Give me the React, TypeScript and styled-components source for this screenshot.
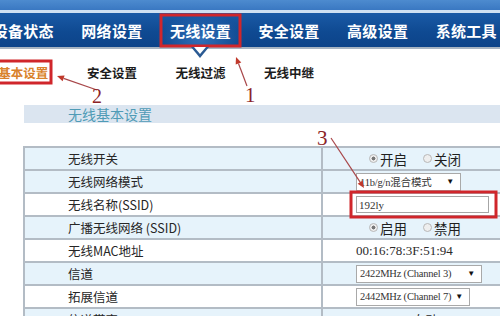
import styled, { createGlobalStyle } from "styled-components";

const GlobalStyle = createGlobalStyle`
  html, body {
    margin: 0;
    padding: 0;
    background: #ffffff;
    overflow: hidden;
  }
`;

const CJK = `"Noto Sans CJK SC", "Noto Sans", sans-serif`;
const SERIF = `"Liberation Serif", "Noto Sans CJK SC", serif`;

const Page = styled.div`
  position: relative;
  width: 500px;
  height: 316px;
  overflow: hidden;
  background: #ffffff;
  font-family: ${CJK};
`;

const TopBand = styled.div`
  height: 10px;
  background: linear-gradient(180deg, #4d8bcf 0%, #3a78c2 100%);
`;

const TopStrip = styled.div`
  height: 3px;
  background: #cfe0f2;
`;

const NavBar = styled.div`
  display: flex;
  height: 34px;
  margin-left: -21px;
  background: linear-gradient(180deg, #1a5aa6 0%, #0f4a92 55%, #0c4389 100%);
`;

const NavItem = styled.div<{ $active?: boolean }>`
  position: relative;
  flex: none;
  width: 88.6px;
  display: flex;
  align-items: center;
  justify-content: center;
  color: #ffffff;
  font-size: 15px;
  font-weight: 700;
  letter-spacing: 0.3px;
  background: ${({ $active }) =>
    $active ? "radial-gradient(ellipse at 50% 80%, #2f6fb8 0%, transparent 70%)" : "none"};
`;

const Chevron = styled.svg`
  position: absolute;
  left: 50%;
  bottom: -12px;
  margin-left: -9px;
  z-index: 2;
`;

const NavShadow = styled.div`
  height: 2px;
  background: #a7b4c2;
`;

const SubNav = styled.div`
  display: flex;
  height: 24px;
  margin: 11px 0 0 -21px;
`;

const SubItem = styled.div<{ $active?: boolean }>`
  flex: none;
  width: 88.6px;
  display: flex;
  align-items: center;
  justify-content: center;
  font-size: 12.5px;
  font-weight: 700;
  color: ${({ $active }) => ($active ? "#d9822b" : "#1c1c1c")};
`;

const SectionBar = styled.div`
  height: 18px;
  margin: 21px 0 0 24px;
  padding-left: 44px;
  display: flex;
  align-items: center;
  background: #dbe5f0;
  color: #4f9bb6;
  font-size: 14px;
`;

const Table = styled.div`
  margin: 23px 0 0 23px;
  width: 520px;
  border-top: 2px solid #b3bcc5;
  border-left: 2px solid #b3bcc5;
`;

const Row = styled.div<{ $shaded?: boolean }>`
  display: grid;
  grid-template-columns: 298px 1fr;
  height: 21px;
  border-bottom: 2px solid #b3bcc5;
  background: ${({ $shaded }) => ($shaded ? "#e6f3fb" : "#ffffff")};
`;

const Label = styled.div`
  display: flex;
  align-items: center;
  padding-left: 43px;
  border-right: 2px solid #b3bcc5;
  font-size: 12.5px;
  color: #262626;
`;

const Value = styled.div`
  display: flex;
  align-items: center;
  padding-left: 33px;
  font-family: ${SERIF};
  font-size: 13px;
  color: #2a2a2a;
  white-space: nowrap;
`;

const RadioGroup = styled.div`
  display: flex;
  align-items: center;
  gap: 16px;
  margin-left: 13px;
`;

const RadioLabel = styled.span`
  display: flex;
  align-items: center;
  gap: 2px;
  font-family: ${CJK};
  font-size: 13.5px;
  color: #1f1f1f;
`;

const RadioDot = styled.span<{ $checked?: boolean }>`
  width: 7px;
  height: 7px;
  border-radius: 50%;
  border: 1px solid #b8b8b8;
  background: ${({ $checked }) =>
    $checked ? "radial-gradient(circle, #777 0 35%, #eee 45%)" : "#eeeeee"};
`;

const SelectBox = styled.div<{ $w: number }>`
  display: flex;
  align-items: center;
  justify-content: space-between;
  box-sizing: border-box;
  width: ${({ $w }) => $w}px;
  height: 18px;
  padding: 0 6px 0 3px;
  border: 1px solid #a9a9a9;
  background: #ffffff;
  font-size: 10.5px;
  letter-spacing: -0.2px;
  color: #333;
  white-space: nowrap;
  font-family: ${SERIF}, ${CJK};
`;

const Caret = styled.span`
  font-size: 8px;
  color: #111;
`;

const TextInput = styled.div`
  box-sizing: border-box;
  width: 133px;
  height: 17px;
  padding-left: 2px;
  display: flex;
  align-items: center;
  border: 1px solid #a6a6a6;
  background: #ffffff;
  font-size: 11px;
  color: #333;
`;

const Overlay = styled.svg`
  position: absolute;
  left: 0;
  top: 0;
  pointer-events: none;
`;

const navItems = ["设备状态", "网络设置", "无线设置", "安全设置", "高级设置", "系统工具"];
const subItems = ["基本设置", "安全设置", "无线过滤", "无线中继"];

function Radios({ on, off }: { on: string; off: string }) {
  return (
    <RadioGroup>
      <RadioLabel>
        <RadioDot $checked />
        {on}
      </RadioLabel>
      <RadioLabel>
        <RadioDot />
        {off}
      </RadioLabel>
    </RadioGroup>
  );
}

function Select({ text, width }: { text: string; width: number }) {
  return (
    <SelectBox $w={width}>
      <span>{text}</span>
      <Caret>▼</Caret>
    </SelectBox>
  );
}

function Arrow({ x1, y1, x2, y2 }: { x1: number; y1: number; x2: number; y2: number }) {
  // 箭头尖在 (x2, y2)
  const a = Math.atan2(y2 - y1, x2 - x1);
  const len = 7;
  const w = 3;
  const bx = x2 - len * Math.cos(a);
  const by = y2 - len * Math.sin(a);
  const p1 = `${bx + w * Math.sin(a)},${by - w * Math.cos(a)}`;
  const p2 = `${bx - w * Math.sin(a)},${by + w * Math.cos(a)}`;
  return (
    <g>
      <line x1={x1} y1={y1} x2={bx} y2={by} stroke="#a8474a" strokeWidth={1.2} />
      <polygon points={`${x2},${y2} ${p1} ${p2}`} fill="#c0392b" />
    </g>
  );
}

export default function App() {
  return (
    <Page>
      <GlobalStyle />
      <TopBand />
      <TopStrip />
      <NavBar>
        {navItems.map((item, i) => (
          <NavItem key={item} $active={i === 2}>
            {item}
            {i === 2 && (
              <Chevron width="18" height="12" viewBox="0 0 18 12">
                <polygon points="0,0 18,0 9,11" fill="#2a5a93" />
                <polygon points="3,0 15,0 9,7" fill="#ffffff" />
              </Chevron>
            )}
          </NavItem>
        ))}
      </NavBar>
      <NavShadow />

      <SubNav>
        {subItems.map((item, i) => (
          <SubItem key={item} $active={i === 0}>
            {item}
          </SubItem>
        ))}
      </SubNav>

      <SectionBar>无线基本设置</SectionBar>

      <Table>
        <Row $shaded>
          <Label>无线开关</Label>
          <Value>
            <Radios on="开启" off="关闭" />
          </Value>
        </Row>
        <Row $shaded>
          <Label>无线网络模式</Label>
          <Value>
            <Select text="11b/g/n混合模式" width={105} />
          </Value>
        </Row>
        <Row>
          <Label>无线名称(SSID)</Label>
          <Value>
            <TextInput>192ly</TextInput>
          </Value>
        </Row>
        <Row $shaded>
          <Label>广播无线网络 (SSID)</Label>
          <Value>
            <Radios on="启用" off="禁用" />
          </Value>
        </Row>
        <Row>
          <Label>无线MAC地址</Label>
          <Value>00:16:78:3F:51:94</Value>
        </Row>
        <Row $shaded>
          <Label>信道</Label>
          <Value>
            <Select text="2422MHz (Channel 3)" width={126} />
          </Value>
        </Row>
        <Row>
          <Label>拓展信道</Label>
          <Value>
            <Select text="2442MHz (Channel 7)" width={114} />
          </Value>
        </Row>
        <Row $shaded>
          <Label>信道带宽</Label>
          <Value>20/40MHz自动</Value>
        </Row>
      </Table>

      {/* 标注：红框、箭头和编号 */}
      <Overlay width="500" height="316" viewBox="0 0 500 316">
        <rect x="161" y="15" width="79" height="31" fill="none" stroke="#d0262b" strokeWidth="3" />
        <rect x="-3" y="61" width="54" height="22" fill="none" stroke="#d0262b" strokeWidth="3" />
        <rect x="351" y="192" width="145" height="25" fill="none" stroke="#d0262b" strokeWidth="3" />

        <Arrow x1={247} y1={86} x2={236} y2={57} />
        <Arrow x1={97} y1={90} x2={57} y2={76} />
        <Arrow x1={331} y1={138} x2={364} y2={188} />

        <text x="245" y="102" fontFamily="Liberation Serif, serif" fontSize="21" fill="#8c2326">1</text>
        <text x="92" y="103" fontFamily="Liberation Serif, serif" fontSize="20" fill="#8c2326">2</text>
        <text x="317" y="145" fontFamily="Liberation Serif, serif" fontSize="21" fill="#8c2326">3</text>
      </Overlay>
    </Page>
  );
}
